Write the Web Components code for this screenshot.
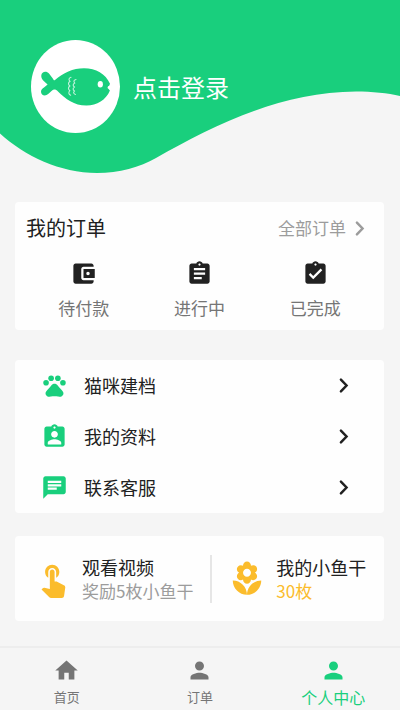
<!DOCTYPE html>
<html lang="zh-CN">
<head>
<meta charset="utf-8">
<meta name="viewport" content="width=device-width, initial-scale=1">
<title>个人中心</title>
<style>
  :root {
    --green: #19cf7d;
    --amber: #fbbc2c;
    --ink: #212121;
    --muted: #757575;
    --faint: #9c9c9c;
    --page: #f5f5f5;
  }
  body {
    margin: 0;
    background: var(--page);
    color: var(--ink);
    font-family: "Noto Sans CJK SC", "Noto Sans", sans-serif;
  }
</style>
</head>
<body>
<profile-page></profile-page>

<script>
const ICONS = {
  home: '<path d="M10 20v-6h4v6h5v-8h3L12 3 2 12h3v8z"/>',
  person: '<path d="M12 12c2.21 0 4-1.79 4-4s-1.79-4-4-4-4 1.79-4 4 1.79 4 4 4zm0 2c-2.67 0-8 1.34-8 4v2h16v-2c0-2.66-5.33-4-8-4z"/>',
  wallet: '<path d="M21 18v1c0 1.1-.9 2-2 2H5c-1.11 0-2-.9-2-2V5c0-1.1.89-2 2-2h14c1.1 0 2 .9 2 2v1h-9c-1.11 0-2 .9-2 2v8c0 1.1.89 2 2 2h9zm-9-2h10V8H12v8zm4-2.5c-.83 0-1.5-.67-1.5-1.5s.67-1.5 1.5-1.5 1.5.67 1.5 1.5-.67 1.5-1.5 1.5z"/>',
  assignment: '<path d="M19 3h-4.18C14.4 1.84 13.3 1 12 1c-1.3 0-2.4.84-2.82 2H5c-1.1 0-2 .9-2 2v14c0 1.1.9 2 2 2h14c1.1 0 2-.9 2-2V5c0-1.1-.9-2-2-2zm-7 0c.55 0 1 .45 1 1s-.45 1-1 1-1-.45-1-1 .45-1 1-1zm2 14H7v-2h7v2zm3-4H7v-2h10v2zm0-4H7V7h10v2z"/>',
  done: '<path d="M19 3h-4.18C14.4 1.84 13.3 1 12 1c-1.3 0-2.4.84-2.82 2H5c-1.1 0-2 .9-2 2v14c0 1.1.9 2 2 2h14c1.1 0 2-.9 2-2V5c0-1.1-.9-2-2-2zm-7 0c.55 0 1 .45 1 1s-.45 1-1 1-1-.45-1-1 .45-1 1-1zm-2 14l-4-4 1.41-1.41L10 14.17l6.59-6.59L18 9l-8 8z"/>',
  profile: '<path d="M19 3h-4.18C14.4 1.84 13.3 1 12 1c-1.3 0-2.4.84-2.82 2H5c-1.1 0-2 .9-2 2v14c0 1.1.9 2 2 2h14c1.1 0 2-.9 2-2V5c0-1.1-.9-2-2-2zm-7 0c.55 0 1 .45 1 1s-.45 1-1 1-1-.45-1-1 .45-1 1-1zm0 4c1.66 0 3 1.34 3 3s-1.34 3-3 3-3-1.34-3-3 1.34-3 3-3zm6 12H6v-1.4c0-2 4-3.1 6-3.1s6 1.1 6 3.1V19z"/>',
  pets: '<circle cx="4.5" cy="9.5" r="2.5"/><circle cx="9" cy="5.5" r="2.5"/><circle cx="15" cy="5.5" r="2.5"/><circle cx="19.5" cy="9.5" r="2.5"/><path d="M17.34 14.86c-.87-1.02-1.6-1.89-2.48-2.91-.46-.54-1.05-1.08-1.75-1.32-.11-.04-.22-.07-.33-.09-.25-.04-.52-.04-.78-.04s-.53 0-.79.05c-.11.02-.22.05-.33.09-.7.24-1.28.78-1.75 1.32-.87 1.02-1.6 1.89-2.48 2.91-1.31 1.31-2.92 2.76-2.62 4.79.29 1.02 1.02 2.03 2.33 2.32.73.15 3.06-.44 5.54-.44h.18c2.48 0 4.81.58 5.54.44 1.31-.29 2.04-1.31 2.33-2.32.31-2.04-1.3-3.49-2.61-4.8z"/>',
  chat: '<path d="M20 2H4c-1.1 0-1.99.9-1.99 2L2 22l4-4h14c1.1 0 2-.9 2-2V4c0-1.1-.9-2-2-2zM6 9h12v2H6V9zm8 5H6v-2h8v2zm4-6H6V6h12v2z"/>',
  touch: '<path d="M9 11.24V7.5C9 6.12 10.12 5 11.5 5S14 6.12 14 7.5v3.74c1.21-.81 2-2.18 2-3.74C16 5.01 13.99 3 11.5 3S7 5.01 7 7.5c0 1.56.79 2.93 2 3.74zm9.84 4.63l-4.54-2.26c-.17-.07-.35-.11-.54-.11H13v-6c0-.83-.67-1.5-1.5-1.5S10 6.67 10 7.5v10.74l-3.43-.72c-.08-.01-.15-.03-.24-.03-.31 0-.59.13-.79.33l-.79.8 4.94 4.94c.27.27.65.44 1.06.44h6.79c.75 0 1.33-.55 1.44-1.28l.75-5.27c.01-.07.02-.14.02-.2 0-.62-.38-1.16-.91-1.38z"/>',
  flower: '<path d="M12 22c4.97 0 9-4.03 9-9-4.97 0-9 4.03-9 9zM5.6 10.25c0 1.38 1.12 2.5 2.5 2.5.53 0 1.01-.16 1.42-.44l-.02.19c0 1.38 1.12 2.5 2.5 2.5s2.5-1.12 2.5-2.5l-.02-.19c.4.28.89.44 1.42.44 1.38 0 2.5-1.12 2.5-2.5 0-1-.59-1.85-1.43-2.25.84-.4 1.43-1.25 1.43-2.25 0-1.38-1.12-2.5-2.5-2.5-.53 0-1.01.16-1.42.44l.02-.19C14.5 2.12 13.38 1 12 1S9.5 2.12 9.5 3.5l.02.19c-.4-.28-.89-.44-1.42-.44-1.38 0-2.5 1.12-2.5 2.5 0 1 .59 1.85 1.43 2.25-.84.4-1.43 1.25-1.43 2.25zM12 5.5c1.38 0 2.5 1.12 2.5 2.5s-1.12 2.5-2.5 2.5S9.5 9.38 9.5 8s1.12-2.5 2.5-2.5zM3 13c0 4.97 4.03 9 9 9 0-4.97-4.03-9-9-9z"/>',
  chevron: '<path d="M9.700 6.800L14.700 12l-5 5.200" fill="none" stroke="currentColor" stroke-width="2.200" stroke-linecap="round"/>'
};

class Base extends HTMLElement {
  connectedCallback() {
    if (this.shadowRoot) return;
    this.attachShadow({ mode: "open" }).innerHTML = this.render();
  }
}
const RESET = `
  * { box-sizing: border-box; }
  button, a { font: inherit; color: inherit; background: none; border: 0; margin: 0; padding: 0; text-decoration: none; text-align: left; cursor: pointer; }
`;

customElements.define("app-icon", class extends Base {
  render() {
    return `<style>
      :host { display: block; flex: none; width: 27px; height: 27px; }
      svg { display: block; width: 100%; height: 100%; fill: currentColor; }
    </style><svg viewBox="0 0 24 24" aria-hidden="true">${ICONS[this.getAttribute("name")]}</svg>`;
  }
});

customElements.define("fish-avatar", class extends Base {
  render() {
    return `<style>
      :host { display: block; flex: none; width: 89px; height: 93px; color: var(--green); }
      svg { display: block; width: 100%; height: 100%; }
    </style>
    <svg viewBox="0 0 89 93" aria-hidden="true">
      <ellipse cx="44.5" cy="46.5" rx="44.5" ry="46.5" fill="#fff"/>
      <path fill="currentColor" d="M24 40C32 33 42 28.300 53 28.300c12 0 21.500 5.500 26 15.500l-.8 1.900c-1.800.3-2.200 2.600-.6 3.300l1.300 1.500C75 60 66 65.600 55.500 65.600 43 65.600 34.500 59 27 51.500c-2.200-2.200-4.200-2.600-6.200-.8l-3.600 3.300c-3 2.700-7.200 1.200-7.200-2.300 0-2.200 1.500-3.200 3-4.300l3.600-2.900-3.600-3.200c-1.800-1.600-3-3.600-2.700-6 .4-3.800 5-4.900 7.700-1.900l3.600 4.800c1 1.600 1.400 2.600 2.400 1.800z"/>
      <ellipse cx="69.3" cy="44.3" rx="2.600" ry="3.200" fill="#fff"/>
      <g fill="none" stroke="#c4f2dc" stroke-width="1.100" stroke-linecap="round">
        <path d="M40 37.300c-2.500.8-2.500 2.500-1 4-2 1.500-2 3-.2 4.700-1.800 1.500-1.800 3 0 4.700-1.500 1.500-1.300 3.500.8 4.500"/>
        <path d="M45 39.500c-2.500.5-2.500 2-1.300 3.500-2 1.300-2 2.700-.3 4-1.700 1.400-1.700 2.700 0 4-1.300 1.300-1 2.800 1 3.500"/>
      </g>
    </svg>`;
  }
});

customElements.define("wave-header", class extends Base {
  render() {
    return `<style>${RESET}
      :host { display: grid; color: #fff; }
      .wave { grid-area: 1 / 1; display: block; width: 100%; height: 174px; fill: var(--green); }
      button { grid-area: 1 / 1; justify-self: start; align-self: start; display: flex; align-items: center; gap: 13px; padding: 40px 0 0 31px; font-size: 24px; line-height: 36px; }
    </style>
    <svg class="wave" viewBox="0 0 400 174" preserveAspectRatio="none" aria-hidden="true">
      <path d="M0 0H400V96C388 93 372 91.500 356 91.500 280 92 212 126 156 158 140 167 119 173 97 173 60 173 25 156 0 133.500Z"/>
    </svg>
    <button type="button"><fish-avatar></fish-avatar><span><slot></slot></span></button>`;
  }
});

customElements.define("app-card", class extends Base {
  render() {
    return `<style>:host { display: block; margin: 0 16px 0 15px; background: #fefefe; border-radius: 4px; }</style><slot></slot>`;
  }
});

customElements.define("order-status", class extends Base {
  render() {
    return `<style>${RESET}
      :host { display: block; }
      button { width: 100%; display: flex; flex-direction: column; align-items: center; gap: 9px; font-size: 17px; line-height: 24px; }
      span { color: var(--muted); }
    </style>
    <button type="button"><app-icon name="${this.getAttribute("icon")}"></app-icon><span><slot></slot></span></button>`;
  }
});

customElements.define("order-panel", class extends Base {
  render() {
    return `<style>${RESET}
      :host { display: block; padding: 10px 11px; }
      header { display: flex; justify-content: space-between; align-items: center; }
      h2 { margin: 0; font-size: 20px; line-height: 32px; font-weight: 400; }
      a { display: flex; align-items: center; font-size: 17px; line-height: 32px; color: var(--faint); }
      .grid { display: grid; grid-template-columns: repeat(3, 1fr); padding-top: 16px; }
    </style>
    <header><h2>我的订单</h2><a href="#orders">全部订单<app-icon name="chevron"></app-icon></a></header>
    <div class="grid">
      <order-status icon="wallet">待付款</order-status>
      <order-status icon="assignment">进行中</order-status>
      <order-status icon="done">已完成</order-status>
    </div>`;
  }
});

customElements.define("menu-row", class extends Base {
  render() {
    return `<style>${RESET}
      :host { display: block; }
      a { display: flex; align-items: center; height: 51px; padding: 0 27px 0 26px; gap: 16px; font-size: 18px; line-height: 27px; }
      span { flex: 1; }
      .lead { color: var(--green); }
    </style>
    <a href="#${this.getAttribute("icon")}"><app-icon class="lead" name="${this.getAttribute("icon")}"></app-icon><span><slot></slot></span><app-icon name="chevron"></app-icon></a>`;
  }
});

customElements.define("reward-tile", class extends Base {
  render() {
    return `<style>${RESET}
      :host { display: block; white-space: nowrap; }
      button { display: flex; align-items: center; gap: 10px; }
      app-icon { width: 38px; height: 38px; color: var(--amber); }
      .text { display: flex; flex-direction: column; }
      .title { font-size: 18px; line-height: 24px; }
      .note { font-size: 17px; line-height: 24px; color: var(--note, var(--faint)); }
    </style>
    <button type="button"><app-icon name="${this.getAttribute("icon")}"></app-icon>
      <span class="text"><span class="title"><slot></slot></span><span class="note"><slot name="note"></slot></span></span></button>`;
  }
});

customElements.define("reward-panel", class extends Base {
  render() {
    return `<style>
      :host { display: flex; align-items: center; padding: 19px 0 18px; }
      reward-tile { padding-left: 19px; }
      .first { flex: 196 1 0; border-right: 2px solid #e6e6e6; }
      .second { flex: 173 1 0; --note: var(--amber); padding-left: 16px; }
    </style>
    <reward-tile class="first" icon="touch">观看视频<span slot="note">奖励5枚小鱼干</span></reward-tile>
    <reward-tile class="second" icon="flower">我的小鱼干<span slot="note">30枚</span></reward-tile>`;
  }
});

customElements.define("nav-tab", class extends Base {
  render() {
    return `<style>${RESET}
      :host { display: block; color: var(--muted); }
      a { display: flex; flex-direction: column; align-items: center; gap: 3px; font-size: 13px; line-height: 20px; }
      :host([active]) { color: var(--green); }
      :host([active]) a { font-size: 16px; }
    </style>
    <a href="#${this.getAttribute("icon")}"><app-icon name="${this.getAttribute("icon")}"></app-icon><span><slot></slot></span></a>`;
  }
});

customElements.define("tab-bar", class extends Base {
  render() {
    return `<style>
      :host { display: grid; grid-template-columns: repeat(3, 1fr); padding: 9px 0 3px; border-top: 2px solid #ededed; }
    </style><slot></slot>`;
  }
});

customElements.define("profile-page", class extends Base {
  render() {
    return `<style>
      :host { display: flex; flex-direction: column; min-height: 100vh; }
      main { display: flex; flex-direction: column; gap: 30px; padding: 28px 0 24px; }
      .rewards { margin-top: -7px; }
      tab-bar { margin-top: auto; }
    </style>
    <wave-header>点击登录</wave-header>
    <main>
      <app-card><order-panel></order-panel></app-card>
      <app-card>
        <menu-row icon="pets">猫咪建档</menu-row>
        <menu-row icon="profile">我的资料</menu-row>
        <menu-row icon="chat">联系客服</menu-row>
      </app-card>
      <app-card class="rewards"><reward-panel></reward-panel></app-card>
    </main>
    <tab-bar>
      <nav-tab icon="home">首页</nav-tab>
      <nav-tab icon="person">订单</nav-tab>
      <nav-tab icon="person" active>个人中心</nav-tab>
    </tab-bar>`;
  }
});
</script>
</body>
</html>
